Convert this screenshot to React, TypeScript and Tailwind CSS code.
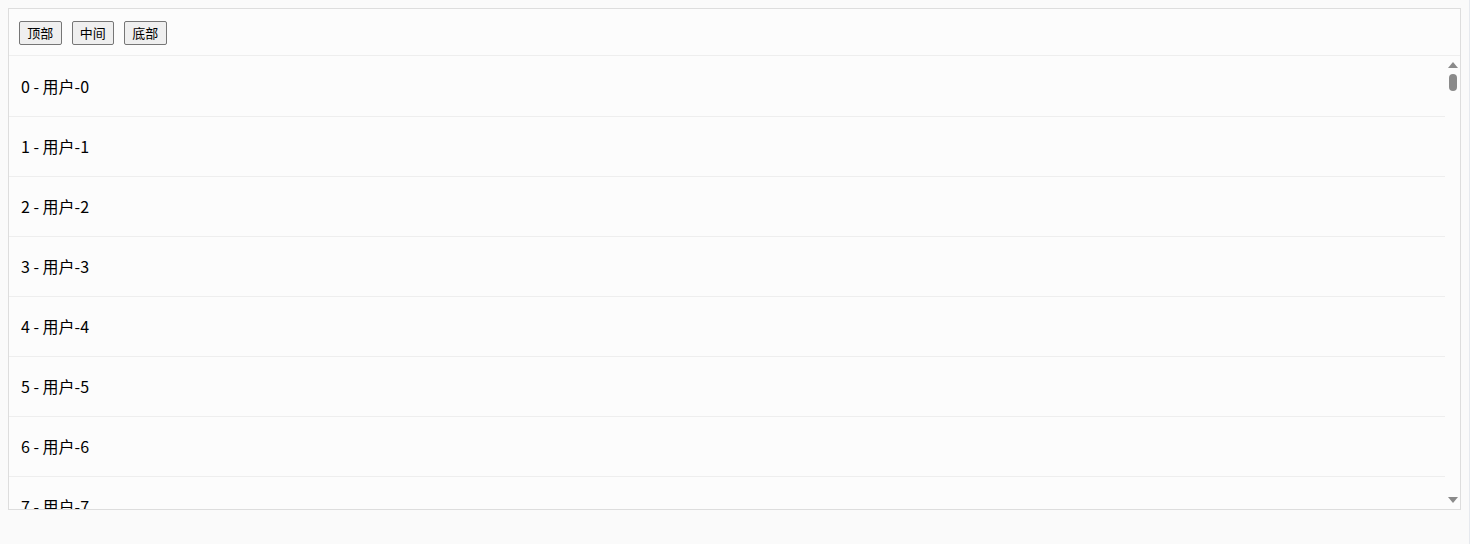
import React from "react";

const rows = Array.from({ length: 50 }, (_, i) => i);

export default function App() {
  return (
    <div
      className="flex min-h-[544px] bg-[#fafafa] text-black"
      style={{ fontFamily: '"Noto Sans CJK SC", "Noto Sans", sans-serif' }}
    >
      <div className="flex-1 p-2">
        <div className="w-[1453px] border border-[#dddddd] bg-[#fcfcfc]">
          <div className="flex h-[47px] items-center gap-[10px] border-b border-[#eeeeee] px-[10px] pt-[1px]">
            {["顶部", "中间", "底部"].map((t) => (
              <button
                key={t}
                className="flex h-[24px] w-[42.5px] items-center justify-center rounded-[2px] border border-[#767676] bg-[#efefef] text-[13px] leading-none text-black"
              >
                {t}
              </button>
            ))}
          </div>
          <div className="flex h-[453px]">
            <div className="flex-1 overflow-hidden pt-[1px]">
              {rows.map((i) => (
                <div
                  key={i}
                  className="flex h-[60px] items-center border-b border-[#eeeeee] px-3 pb-[2px] text-[16px]"
                >
                  {i} - 用户-{i}
                </div>
              ))}
            </div>
            <div className="flex w-[15px] flex-col items-center py-[5px]">
              <svg width="10" height="6" viewBox="0 0 10 6" className="mt-[1px]">
                <path d="M5 0 L10 6 L0 6 Z" fill="#8a8a8a" />
              </svg>
              <div className="mt-[6px] h-[17px] w-[8px] rounded-full bg-[#8a8a8a]" />
              <div className="flex-1" />
              <svg width="10" height="6" viewBox="0 0 10 6" className="mb-[1px]">
                <path d="M0 0 L10 0 L5 6 Z" fill="#8a8a8a" />
              </svg>
            </div>
          </div>
        </div>
      </div>
      <div className="w-[3px] border-l border-[#e6e9ee] bg-[#fdfdfe]" />
    </div>
  );
}
